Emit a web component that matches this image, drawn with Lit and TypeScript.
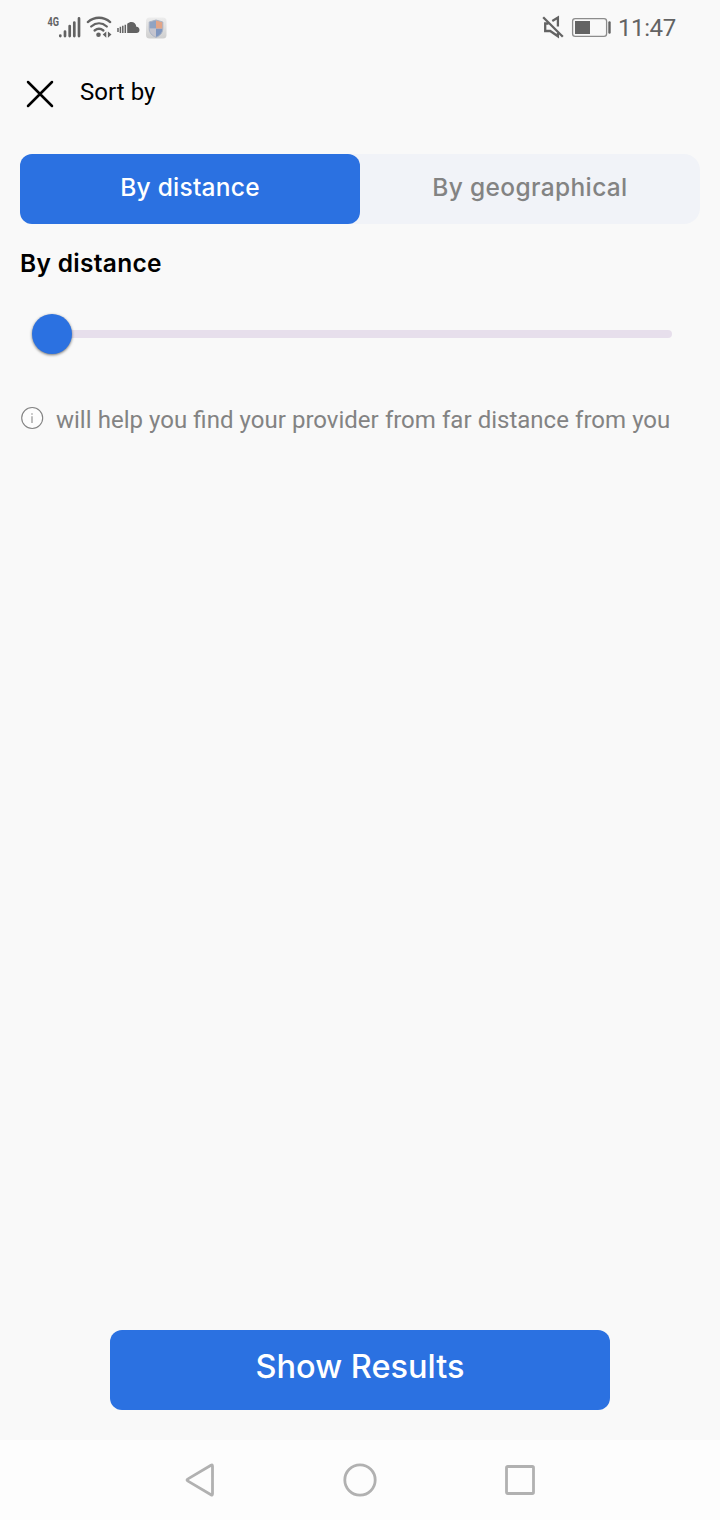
import { LitElement, html, css, svg } from "lit";
import { customElement, state } from "lit/decorators.js";

@customElement("status-bar")
class StatusBar extends LitElement {
  static styles = css`
    :host { display: flex; justify-content: space-between; height: 56px; font-family: Roboto, sans-serif; color: #636363; }
    svg { display: block; }
    .right { display: flex; }
    .time { width: 102px; padding-top: 13px; box-sizing: border-box; font-size: 24px; line-height: 30px; letter-spacing: -0.4px; }
    .net { font: 700 13px Roboto, sans-serif; }
  `;
  render() {
    return html`
      <svg width="180" height="56" viewBox="0 0 180 56" fill="#636363">
        <text class="net" x="47.5" y="26" textLength="11.5" lengthAdjust="spacingAndGlyphs">4G</text>
        <g stroke="#636363" stroke-width="2.7" stroke-linecap="round">
          <path d="M60.3 35.5v.6M65 31.5v4.6M69.7 26v10.1M74.3 22.5v13.6M79 18.4v17.7" />
        </g>
        <g fill="none" stroke="#636363" stroke-width="2.3" stroke-linecap="round">
          <path d="M87.8 22.1C94.5 16.3 103.5 16.3 110.2 22.1M91.2 26.5C96 22.4 102 22.4 106.8 26.5M94.6 30.5C97.2 28.4 100.8 28.4 103.4 30.5" />
        </g>
        <circle cx="98.5" cy="34.7" r="2.3" />
        <path d="M106.3 31.5v6.2l-3.6-3.1zM107.9 31.5v6.2l3.6-3.1z" />
        <path d="M127.2 33V23.8C131.5 20.2 136 22.8 136.3 26.8C138.2 26.6 139.5 28.2 139.5 29.9C139.5 31.7 138.2 33 136.5 33z" />
        <path d="M118 28v4M120.4 26.8v6.2M122.8 25.8v7.2M125.3 24.7v8.3" fill="none" stroke="#636363" stroke-width="1.5" />
        <defs>
          <linearGradient id="tile" x1="0" y1="0" x2="0" y2="1">
            <stop offset="0" stop-color="#ededed" /><stop offset="1" stop-color="#cfcfcf" />
          </linearGradient>
          <clipPath id="shield"><path d="M156 20L162.8 22v6.5c0 4.5-3 7.3-6.8 8.8c-3.800-1.500-6.800-4.300-6.800-8.800V22z" /></clipPath>
        </defs>
        <rect x="146" y="17.5" width="20.5" height="21" rx="3.5" fill="url(#tile)" />
        <g clip-path="url(#shield)">
          <rect x="149" y="20" width="7" height="8.7" fill="#8fa3c3" />
          <rect x="156" y="20" width="7" height="8.7" fill="#e3a587" />
          <rect x="149" y="28.7" width="7" height="9" fill="#c4c4ce" />
          <rect x="156" y="28.7" width="7" height="9" fill="#7f96bf" />
        </g>
        <path d="M156 20L162.8 22v6.5c0 4.5-3 7.3-6.8 8.8c-3.800-1.500-6.800-4.300-6.800-8.800V22z" fill="none" stroke="#aab3c4" stroke-width="1" />
      </svg>
      <div class="right">
        <svg width="80" height="56" viewBox="538 0 80 56" fill="none" stroke="#636363">
          <path d="M543.2 17.3L562.8 36.7" stroke-width="2.3" />
          <path d="M552.3 21L557.9 17.6V26.5M557.9 33V36.3L550.2 31H545.2V23.5H548.5" stroke-width="2.3" />
          <rect x="572.6" y="18.6" width="34" height="17.8" rx="2.6" stroke="#8c8c8c" stroke-width="1.3" />
          <rect x="575" y="21" width="15" height="13" fill="#636363" stroke="none" />
          <path d="M609.5 22.5v10" stroke-width="2.4" stroke-linecap="round" />
        </svg>
        <div class="time">11:47</div>
      </div>
    `;
  }
}

@customElement("sort-tabs")
class SortTabs extends LitElement {
  @state() active = 0;
  static styles = css`
    :host { display: block; }
    .tabs { display: grid; grid-template-columns: 1fr 1fr; height: 70px; border-radius: 16px; background: #f1f3f8; }
    .tab { border: 0; margin: 0; padding: 0 0 5px; border-radius: 12px; background: none; color: #838383; font: 500 24.5px Inter, "Open Sans", sans-serif; letter-spacing: 0.35px; }
    .on { background: #2b71e1; color: #fff; letter-spacing: 0.25px; }
  `;
  render() {
    return html`<div class="tabs">
      ${["By distance", "By geographical"].map(
        (label, i) => html`<button class="tab ${i === this.active ? "on" : ""}" @click=${() => (this.active = i)}>${label}</button>`
      )}
    </div>`;
  }
}

@customElement("distance-slider")
class DistanceSlider extends LitElement {
  static styles = css`
    :host { display: flex; align-items: center; height: 40px; }
    .thumb { width: 40px; height: 40px; border-radius: 50%; background: #2b71e1; box-shadow: 0 1px 3px rgba(0, 0, 0, 0.55); z-index: 1; }
    .track { flex: 1; height: 8px; margin-left: -4px; border-radius: 0 4px 4px 0; background: #e7dfec; }
  `;
  render() {
    return html`<div class="thumb"></div><div class="track"></div>`;
  }
}

@customElement("nav-bar")
class NavBar extends LitElement {
  static styles = css`
    :host { display: flex; justify-content: center; gap: 120px; height: 80px; align-items: center; background: #fdfdfd; }
    svg { display: block; }
  `;
  render() {
    const icon = (shape: unknown) =>
      html`<svg width="40" height="40" viewBox="0 0 40 40" fill="none" stroke="#b1b1b1" stroke-width="2.8" stroke-linejoin="round">${shape}</svg>`;
    return html`
      ${icon(svg`<path d="M32.500 6.200Q32.500 4.400 31 5.300L8 18.900Q6 20 8 21.100L31 34.700Q32.500 35.600 32.500 33.800Z" />`)}
      ${icon(svg`<circle cx="20" cy="20" r="15.2" />`)}
      ${icon(svg`<rect x="6.5" y="6.5" width="27" height="27" rx="1.2" />`)}
    `;
  }
}

@customElement("app-root")
class AppRoot extends LitElement {
  static styles = css`
    :host { display: flex; flex-direction: column; height: 1520px; background: #f9f9f9; font-family: Roboto, sans-serif; }
    .header { display: flex; height: 98px; gap: 26px; padding-left: 26px; color: #000; }
    .close { width: 28px; height: 28px; margin-top: 24px; }
    .title { margin-top: 21px; font-size: 24px; line-height: 30px; letter-spacing: 0.05px; }
    .body { flex: 1; display: flex; flex-direction: column; padding: 0 20px; }
    .heading { margin: 21px 0 0; font: 600 24.5px/36px Inter, "Open Sans", sans-serif; letter-spacing: 0.3px; color: #000; }
    .slider { margin: 33px 28px 0 12px; }
    .hint { display: flex; gap: 12px; margin-top: 51px; color: #838383; font-size: 24px; line-height: 30px; word-spacing: 0.2px; white-space: nowrap; }
    .info { width: 24px; height: 24px; margin-top: 1px; }
    .show { align-self: center; width: 500px; height: 80px; margin-top: auto; margin-bottom: 30px; padding: 0 0 7px; border: 0; border-radius: 12px; background: #2b71e1; color: #fff; font: 500 32.5px Inter, "Open Sans", sans-serif; }
  `;
  render() {
    return html`
      <status-bar></status-bar>
      <div class="header">
        <svg class="close" viewBox="0 0 28 28" fill="none" stroke="#000" stroke-width="2.5" stroke-linecap="round"><path d="M2 2L26 26M26 2L2 26" /></svg>
        <div class="title">Sort by</div>
      </div>
      <div class="body">
        <sort-tabs></sort-tabs>
        <h2 class="heading">By distance</h2>
        <distance-slider class="slider"></distance-slider>
        <div class="hint">
          <svg class="info" viewBox="0 0 24 24"><circle cx="12.2" cy="12" r="10.5" fill="#fdfdfd" stroke="#838383" stroke-width="1.1" /><path d="M12 10.200v6.800M12 7.200v1.500" stroke="#939393" stroke-width="1.2" /></svg>
          <span>will help you find your provider from far distance from you</span>
        </div>
        <button class="show">Show Results</button>
      </div>
      <nav-bar></nav-bar>
    `;
  }
}
